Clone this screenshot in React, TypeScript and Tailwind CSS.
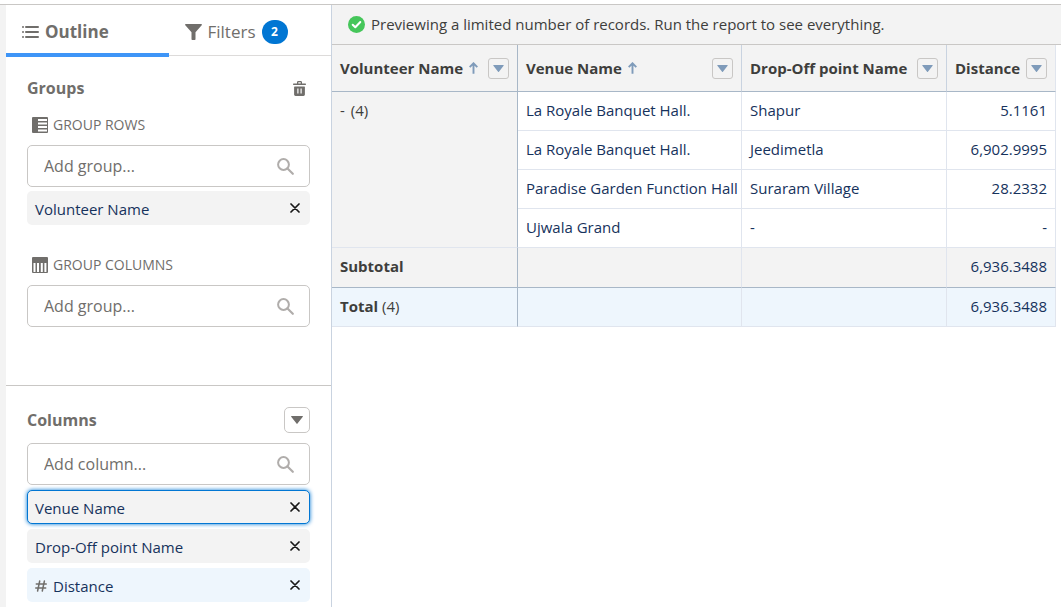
import { useState } from "react";

type IconProps = { className?: string };

const ListIcon = () => (
  <svg width="17" height="12" viewBox="0 0 17 12" fill="currentColor" aria-hidden="true">
    <rect x="0" y="0" width="2" height="2" rx="1" />
    <rect x="0" y="5" width="2" height="2" rx="1" />
    <rect x="0" y="10" width="2" height="2" rx="1" />
    <rect x="3" y="0" width="14" height="2" rx="1" />
    <rect x="3" y="5" width="14" height="2" rx="1" />
    <rect x="3" y="10" width="14" height="2" rx="1" />
  </svg>
);

const FunnelIcon = () => (
  <svg width="17" height="16" viewBox="0 0 17 16" fill="currentColor" aria-hidden="true">
    <path d="M.8 0h15.4c.7 0 1 .7.5 1.200L10.500 8.300v6.900c0 .4-.3.8-.8.8H7.300c-.5 0-.8-.4-.8-.8V8.300L.3 1.200C-.2.700.1 0 .8 0z" />
  </svg>
);

const TrashIcon = () => (
  <svg width="13" height="15" viewBox="0 0 13 15" fill="currentColor" aria-hidden="true">
    <path d="M.6 2.500H4V1.300C4 .6 4.600 0 5.300 0h2.400C8.400 0 9 .6 9 1.300v1.200h3.400c.4 0 .6.200.6.500v.600c0 .3-.2.500-.6.500H.6C.2 4.100 0 3.900 0 3.600V3c0-.3.200-.5.600-.5zM5.300 1.300v1.200h2.400V1.300z" />
    <path fillRule="evenodd" d="M1.600 5.500h9.800c.3 0 .5.200.5.500v7.600c0 .8-.6 1.400-1.400 1.400h-8c-.8 0-1.400-.6-1.400-1.400V6c0-.3.200-.5.500-.5zM4.300 7.500v5h1.200v-5zM7.500 7.500v5h1.200v-5z" />
  </svg>
);

const RowsIcon = () => (
  <svg width="16" height="16" viewBox="0 0 16 16" aria-hidden="true">
    <rect width="16" height="16" rx="1" fill="#706e6b" />
    <path d="M6 2h9v2H6zM6 5.500h9v2H6zM6 9h9v2H6zM6 12.500h9v2H6z" fill="#fff" />
  </svg>
);

const ColumnsIcon = () => (
  <svg width="16" height="16" viewBox="0 0 16 16" aria-hidden="true">
    <rect width="16" height="16" rx="1" fill="#706e6b" />
    <path d="M1.500 6h2v9h-2zM5 6h2v9H5zM8.800 6h2v9h-2zM12.400 6h2v9h-2z" fill="#fff" />
  </svg>
);

const SearchIcon = () => (
  <svg width="17" height="17" viewBox="0 0 17 17" fill="none" stroke="#b0adab" aria-hidden="true">
    <circle cx="6.500" cy="6.500" r="5.400" strokeWidth="2" />
    <path d="M10.500 10.500l5.300 5.300" strokeWidth="2.200" strokeLinecap="round" />
  </svg>
);

const CloseIcon = () => (
  <svg width="10" height="10" viewBox="0 0 10 10" stroke="#181818" strokeWidth="1.700" strokeLinecap="round" aria-hidden="true">
    <path d="M1 1l8 8M9 1l-8 8" />
  </svg>
);

const HashIcon = () => (
  <svg width="12" height="12" viewBox="0 0 12 12" fill="none" stroke="#706e6b" strokeWidth="1.500" strokeLinecap="round" aria-hidden="true">
    <path d="M4.700 1L2.600 11M9.400 1L7.300 11M1.300 4h10M.7 8h10" />
  </svg>
);

const CaretIcon = ({ className }: IconProps) => (
  <svg viewBox="0 0 12 8" fill="currentColor" className={className} aria-hidden="true">
    <path d="M.5 0h11c.4 0 .6.500.3.800L6.500 7.600c-.3.400-.7.400-1 0L.2.800C-.1.500.1 0 .5 0z" />
  </svg>
);

const ArrowUpIcon = () => (
  <svg width="9" height="12" viewBox="0 0 9 12" fill="none" stroke="#7f9bba" strokeWidth="1.900" aria-hidden="true">
    <path d="M4.500 11.800V1.400M.7 5.200l3.800-3.900 3.800 3.900" />
  </svg>
);

const CheckIcon = () => (
  <svg width="17" height="17" viewBox="0 0 17 17" aria-hidden="true">
    <circle cx="8.500" cy="8.500" r="8.500" fill="#45c65a" />
    <path d="M4.700 8.700l2.600 2.600 5-5.300" fill="none" stroke="#fff" strokeWidth="2" strokeLinecap="round" strokeLinejoin="round" />
  </svg>
);

function SearchBox({ id, placeholder }: { id: string; placeholder: string }) {
  return (
    <div className="flex h-[42px] items-center rounded-[5px] border border-[#c9c7c5] bg-white pr-[15px] pl-4">
      <input
        id={id}
        type="text"
        placeholder={placeholder}
        className="h-full min-w-0 flex-1 bg-transparent text-base text-[#3e3e3c] outline-none placeholder:text-[#706e6b]"
      />
      <SearchIcon />
    </div>
  );
}

function Pill({ label, variant = "plain" }: { label: string; variant?: "plain" | "focused" | "numeric" }) {
  const look =
    variant === "focused"
      ? "border-[#0176d3] bg-[#f3f3f3] shadow-[0_0_4px_#0176d3]"
      : variant === "numeric"
        ? "border-transparent bg-[#eef6fd]"
        : "border-transparent bg-[#f3f3f3]";
  return (
    <li className={`flex h-[34px] items-center justify-between rounded-[5px] border pr-[9px] pl-[7px] text-[15px] text-[#16325c] ${look}`}>
      <span className="flex items-center gap-[6px] pt-0.5">
        {variant === "numeric" && <HashIcon />}
        {label}
      </span>
      <button type="button" aria-label={`Remove ${label}`}>
        <CloseIcon />
      </button>
    </li>
  );
}

function HeaderCell({ label, sorted = false, last = false, first = false }: { label: string; sorted?: boolean; last?: boolean; first?: boolean }) {
  const edge = first ? "border-r-[#a8b7c7]" : last ? "border-r-[#e0e5ee]" : "border-r-[#c9d3e0]";
  return (
    <th scope="col" className={`border-r border-b border-b-[#a8b7c7] pr-2 pl-2 text-left font-bold text-[#3e3e3c] ${edge}`}>
      <div className="flex items-center justify-between">
        <span className="flex items-center gap-[6px] whitespace-nowrap">
          {label}
          {sorted && <ArrowUpIcon />}
        </span>
        <button
          type="button"
          aria-label={`${label} actions`}
          className="flex h-[21px] w-[21px] shrink-0 items-center justify-center rounded-[3px] border border-[#c9c7c5] text-[#7f9bba]"
        >
          <CaretIcon className="h-[7px] w-[11px]" />
        </button>
      </div>
    </th>
  );
}

const records = [
  { venue: "La Royale Banquet Hall.", dropOff: "Shapur", distance: "5.1161" },
  { venue: "La Royale Banquet Hall.", dropOff: "Jeedimetla", distance: "6,902.9995" },
  { venue: "Paradise Garden Function Hall", dropOff: "Suraram Village", distance: "28.2332" },
  { venue: "Ujwala Grand", dropOff: "-", distance: "-" },
];

const textCell = "border-r border-b border-[#e0e5ee] pr-0.5 pb-0.5 pl-2 whitespace-nowrap";
const numberCell = "border-r border-b border-[#e0e5ee] px-2 pb-0.5 text-right whitespace-nowrap";
const subtotalCell = "border-r border-b border-r-[#e0e5ee] border-b-[#a8b7c7] px-2 pb-0.5 text-right";
const groupCell = "border-r border-b border-r-[#a8b7c7] px-2 pb-0.5 text-left text-[#3e3e3c]";

export default function App() {
  const [tab, setTab] = useState("outline");
  return (
    <div className="flex min-h-screen flex-col bg-white pt-1 font-['Open_Sans',sans-serif] text-[15px]">
      <div className="flex flex-1 border-t border-[#c9c7c5]">
        <aside className="flex w-[332px] shrink-0 flex-col border-r border-l-6 border-r-[#c9d3e0] border-l-[#f3f3f3] bg-white text-[#706e6b]">
          <div role="tablist" className="flex h-[52px]">
            <button
              type="button"
              role="tab"
              aria-selected={tab === "outline"}
              onClick={() => setTab("outline")}
              className="flex w-1/2 items-center gap-[6px] border-b-4 border-[#3e95f7] pt-[6px] pl-4 text-[17px] font-bold"
            >
              <ListIcon />
              Outline
            </button>
            <button
              type="button"
              role="tab"
              aria-selected={tab === "filters"}
              onClick={() => setTab("filters")}
              className="mb-px flex w-1/2 items-center gap-[6px] border-b border-[#dddbda] pt-1 pl-4 text-[17px]"
            >
              <FunnelIcon />
              Filters
              <span className="flex h-6 w-[26px] items-center justify-center rounded-full bg-[#0176d3] text-xs font-bold text-white">2</span>
            </button>
          </div>

          <section className="border-b border-[#c9c7c5] px-[21px] pt-[19px] pb-[58px]">
            <div className="flex h-6 items-center justify-between pr-1">
              <h2 className="text-base font-bold">Groups</h2>
              <button type="button" aria-label="Remove all groups">
                <TrashIcon />
              </button>
            </div>
            <label htmlFor="group-rows" className="mt-[13px] flex h-6 items-center gap-[5px] pl-[5px] text-sm">
              <RowsIcon />
              GROUP ROWS
            </label>
            <div className="mt-2">
              <SearchBox id="group-rows" placeholder="Add group..." />
            </div>
            <ul className="mt-1">
              <Pill label="Volunteer Name" />
            </ul>
            <label htmlFor="group-columns" className="mt-7 flex h-6 items-center gap-[5px] pl-[5px] text-sm">
              <ColumnsIcon />
              GROUP COLUMNS
            </label>
            <div className="mt-2">
              <SearchBox id="group-columns" placeholder="Add group..." />
            </div>
          </section>

          <section className="px-[21px] pt-[21px] pb-1">
            <div className="flex items-center justify-between">
              <h2 className="text-base font-bold">
                <label htmlFor="columns">Columns</label>
              </h2>
              <button
                type="button"
                aria-label="Column actions"
                className="flex h-[26px] w-[26px] items-center justify-center rounded-[5px] border border-[#c9c7c5]"
              >
                <CaretIcon className="h-2 w-3" />
              </button>
            </div>
            <div className="mt-[10px]">
              <SearchBox id="columns" placeholder="Add column..." />
            </div>
            <ul className="mt-[5px] flex flex-col gap-[5px]">
              <Pill label="Venue Name" variant="focused" />
              <Pill label="Drop-Off point Name" />
              <Pill label="Distance" variant="numeric" />
            </ul>
          </section>
        </aside>

        <main className="min-w-0 flex-1">
          <div className="flex h-10 items-center gap-[6px] border-b border-[#c9c7c5] bg-[#f3f3f3] pl-4 text-[#3e3e3c]">
            <CheckIcon />
            <p>Previewing a limited number of records. Run the report to see everything.</p>
          </div>
          <table className="w-[724px] table-fixed border-separate border-spacing-0 text-[#16325c]">
            <colgroup>
              <col className="w-[186px]" />
              <col className="w-[224px]" />
              <col className="w-[205px]" />
              <col className="w-[109px]" />
            </colgroup>
            <thead>
              <tr className="h-[47px] bg-[#f3f3f3]">
                <HeaderCell label="Volunteer Name" sorted first />
                <HeaderCell label="Venue Name" sorted />
                <HeaderCell label="Drop-Off point Name" />
                <HeaderCell label="Distance" last />
              </tr>
            </thead>
            <tbody>
              {records.map((record, index) => (
                <tr key={index} className="h-[39px]">
                  {index === 0 && (
                    <th scope="rowgroup" rowSpan={4} className={`${groupCell} border-b-[#e0e5ee] bg-[#f3f3f3] pt-[7px] align-top font-normal`}>
                      <span className="flex gap-[6px]">
                        <span>-</span>
                        <span>(4)</span>
                      </span>
                    </th>
                  )}
                  <td className={textCell}>{record.venue}</td>
                  <td className={textCell}>{record.dropOff}</td>
                  <td className={numberCell}>{record.distance}</td>
                </tr>
              ))}
              <tr className="h-10 bg-[#f3f3f3]">
                <th scope="row" className={`${groupCell} border-b-[#a8b7c7] font-bold`}>
                  Subtotal
                </th>
                <td className={subtotalCell} />
                <td className={subtotalCell} />
                <td className={subtotalCell}>6,936.3488</td>
              </tr>
            </tbody>
            <tfoot>
              <tr className="h-[39px] bg-[#eef6fd]">
                <th scope="row" className={`${groupCell} border-b-[#e0e5ee] font-normal`}>
                  <b className="font-bold">Total</b> (4)
                </th>
                <td className={textCell} />
                <td className={textCell} />
                <td className={numberCell}>6,936.3488</td>
              </tr>
            </tfoot>
          </table>
        </main>
      </div>
    </div>
  );
}
